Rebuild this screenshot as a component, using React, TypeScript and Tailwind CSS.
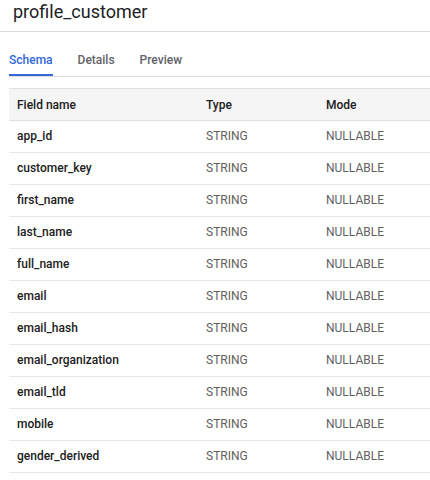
const fields = [
  'app_id',
  'customer_key',
  'first_name',
  'last_name',
  'full_name',
  'email',
  'email_hash',
  'email_organization',
  'email_tld',
  'mobile',
  'gender_derived',
];

function Tabs() {
  return (
    <div className="flex h-[45px] items-stretch gap-[25px] border-b border-[#dadce0]">
      <div className="relative flex items-end pb-[9px] text-[12px] leading-[14px] font-medium text-[#3367d6]">
        Schema
        <div className="absolute bottom-0 left-0 right-0 h-[2px] bg-[#3367d6]" />
      </div>
      <div className="flex items-end pb-[9px] text-[12px] leading-[14px] font-medium text-[#5f6368]">Details</div>
      <div className="flex items-end pb-[9px] text-[12px] leading-[14px] font-medium text-[#5f6368]">Preview</div>
    </div>
  );
}

function SchemaTable() {
  return (
    <table className="mt-[11px] w-full border-collapse text-[12px]">
      <thead>
        <tr className="h-[32px] border-y border-[#e0e0e0] bg-[#f5f5f5] text-left">
          <th className="w-[189px] px-2 font-medium text-[#212121]">Field name</th>
          <th className="w-[120px] px-2 font-medium text-[#212121]">Type</th>
          <th className="px-2 font-medium text-[#212121]">Mode</th>
        </tr>
      </thead>
      <tbody>
        {fields.map((f) => (
          <tr key={f} className="h-[32px] border-b border-[#e8e8e8]">
            <td className="px-2 pb-[1px] font-medium text-[#212121]">{f}</td>
            <td className="px-2 pb-[1px] text-[#616161]">STRING</td>
            <td className="px-2 pb-[1px] text-[#616161]">NULLABLE</td>
          </tr>
        ))}
      </tbody>
    </table>
  );
}

export default function App() {
  return (
    <div className="h-[480px] w-[430px] overflow-hidden bg-white font-['Roboto',sans-serif]">
      <div className="flex h-[32px] items-start border-b border-[#dadce0] pl-[13px]">
        <h1 className="text-[18px] leading-[24px] text-[#202124]">profile_customer</h1>
      </div>
      <div className="pl-[9px]">
        <Tabs />
        <SchemaTable />
      </div>
    </div>
  );
}
